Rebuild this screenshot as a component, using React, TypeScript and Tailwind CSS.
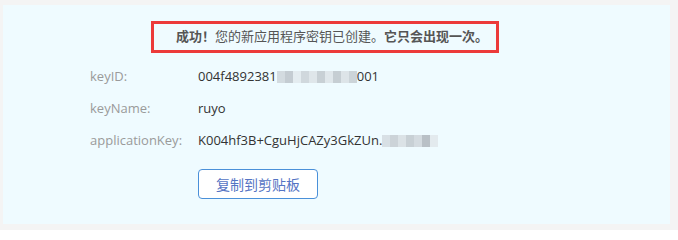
import React from "react";

const font = { fontFamily: '"Open Sans", "Noto Sans CJK SC", sans-serif' };

const Blur = ({ widths }: { widths: string[] }) => (
  <span className="inline-flex items-center h-[14px] blur-[0.6px]">
    {widths.map((c, i) => (
      <span key={i} className={`inline-block h-[12px] w-[8px] ${c}`} />
    ))}
  </span>
);

const Row = ({ label, children }: { label: string; children: React.ReactNode }) => (
  <div className="flex items-center h-[32px]">
    <div className="w-[108px] text-[#9a9a9a]">{label}</div>
    <div className="flex items-center text-[#333]">{children}</div>
  </div>
);

export default function App() {
  return (
    <div className="w-[678px] h-[230px] bg-[#f4f4f4] pt-[5px] pl-[3px] pr-[8px] pb-[6px]" style={font}>
      <div className="h-[219px] bg-[#effbff] pt-[16px] text-[13px]">
        <div className="ml-[148px] w-[348px] h-[32px] border-[3px] border-[#ec3a3a] flex items-center pl-[22px] text-[#555] text-[13px] whitespace-nowrap">
          <span className="font-bold">成功！</span>
          <span>您的新应用程序密钥已创建。</span>
          <span className="font-bold">它只会出现一次。</span>
        </div>
        <div className="mt-[8px] pl-[87px]">
          <Row label="keyID:">
            <span>004f4892381</span>
            <Blur
              widths={[
                "bg-[#d3dbe0]",
                "bg-[#c4ccd2]",
                "bg-[#e4ecf0]",
                "bg-[#d0d8dd]",
                "bg-[#dfe6ea]",
                "bg-[#c8d0d5]",
                "bg-[#e0e7eb]",
                "bg-[#c6ced3]",
                "bg-[#dde4e8]",
                "bg-[#ccd4d9]",
              ]}
            />
            <span>001</span>
          </Row>
          <Row label="keyName:">
            <span>ruyo</span>
          </Row>
          <Row label="applicationKey:">
            <span>K004hf3B+CguHjCAZy3GkZUn.</span>
            <Blur
              widths={[
                "bg-[#d8e0e5]",
                "bg-[#ccd3d8]",
                "bg-[#dbe2e6]",
                "bg-[#c8d0d5]",
                "bg-[#d4dbe0]",
                "bg-[#b9c0c6]",
                "bg-[#e3eaee]",
              ]}
            />
          </Row>
          <button className="mt-[12px] ml-[108px] w-[120px] h-[30px] bg-white border border-[#4a90d9] rounded-[4px] text-[#5574c4] text-[14px]">
            复制到剪贴板
          </button>
        </div>
      </div>
    </div>
  );
}
